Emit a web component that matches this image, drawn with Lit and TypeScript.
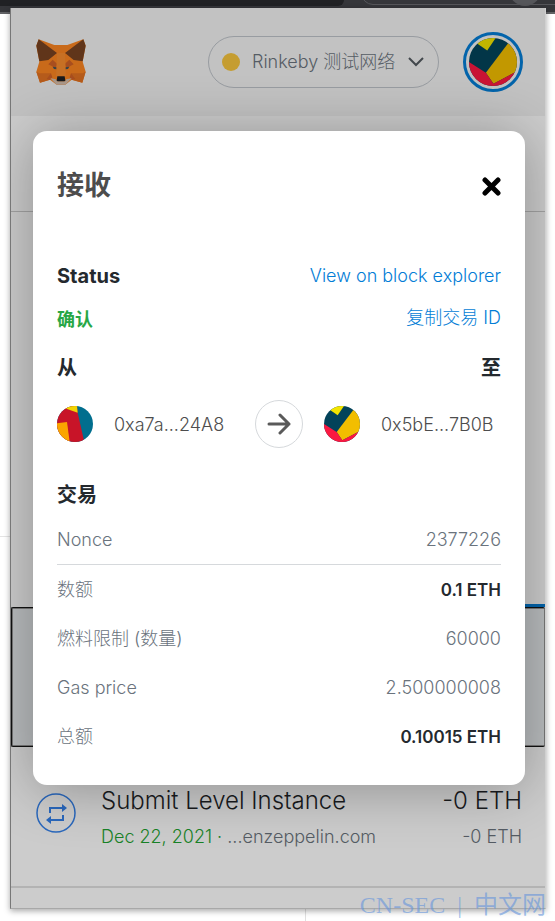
import { LitElement, html, svg, css } from "lit";
import { customElement, property } from "lit/decorators.js";
import { classMap } from "lit/directives/class-map.js";

type Row = { label: string; value: string; strong?: boolean; ruled?: boolean };

const ROWS: Row[] = [
  { label: "Nonce", value: "2377226", ruled: true },
  { label: "数额", value: "0.1 ETH", strong: true },
  { label: "燃料限制 (数量)", value: "60000" },
  { label: "Gas price", value: "2.500000008" },
  { label: "总额", value: "0.10015 ETH", strong: true },
];

@customElement("jazz-avatar")
export class JazzAvatar extends LitElement {
  @property() kind: "to" | "from" = "to";

  static styles = css`
    :host { display: block; border-radius: 50%; overflow: hidden; flex: none; }
    .art { display: block; width: 100%; height: 100%; }
  `;

  render() {
    const to = svg`
      <rect width="108" height="108" fill="#03435a"/>
      <path d="M15 10 41 28 60 0H15z" fill="#f3e400"/>
      <path d="M88 12 38 78 55 103 108 75V0z" fill="#f2be00"/>
      <path d="M0 54 38 78 55 103 108 75V108H0z" fill="#fb1841"/>`;
    const from = svg`
      <rect width="108" height="108" fill="#016e8e"/>
      <path d="M0 0H60L62 20 82 108H0z" fill="#c81428"/>
      <path d="M28 8 62 20 60 0H28z" fill="#f2d402"/>
      <path d="M0 52 30 48 38 108H0z" fill="#fba500"/>`;
    return html`<svg class="art" viewBox="0 0 108 108" aria-hidden="true">${this.kind === "to" ? to : from}</svg>`;
  }
}

@customElement("transaction-dialog")
export class TransactionDialog extends LitElement {
  static styles = css`
    :host { display: block; }
    * { box-sizing: border-box; }
    .dialog {
      padding: 35px 24px 24px;
      border-radius: 14px;
      background: #fff;
      box-shadow: 0 4px 56px rgba(0, 0, 0, 0.3);
      color: #24292e;
    }
    .row { display: flex; align-items: center; justify-content: space-between; }
    .head { height: 40px; margin-bottom: 49px; }
    .title { margin: 0; font-size: 27px; line-height: 40px; font-weight: 700; color: #4d4d4d; }
    .close { width: 20px; height: 20px; padding: 0; border: 0; background: none; cursor: pointer; }
    .close svg { display: block; }
    .line { height: 42px; }
    .ends { height: 58px; }
    .sub { margin: 0; font-size: 20px; line-height: 28px; font-weight: 700; }
    .confirmed { font-size: 18px; font-weight: 700; color: #28a745; }
    .link { padding: 0; border: 0; background: none; font: inherit; font-size: 18px; line-height: 24px; color: #037dd6; text-decoration: none; cursor: pointer; }
    .parties { display: grid; grid-template-columns: 1fr 48px 1fr; align-items: center; margin: 3px 0 33px; }
    .party { display: flex; align-items: center; gap: 21px; font-size: 18px; color: #4d4d4d; }
    .right { padding-left: 21px; }
    .avatar { width: 36px; height: 36px; }
    .arrow { display: grid; place-items: center; height: 48px; border: 1px solid #d6d9dc; border-radius: 50%; }
    .data { width: 100%; margin-top: 6px; border-collapse: separate; border-spacing: 0; font-size: 18px; line-height: 24px; color: #6a737d; }
    .data th, .data td { height: 49px; padding: 0; font-weight: inherit; }
    .data th { text-align: left; }
    .data td { text-align: right; }
    .data .ruled th, .data .ruled td { height: 50px; border-bottom: 1px solid #d6d9dc; }
    .data .strong td { font-size: 17px; font-weight: 600; color: #24292e; }
  `;

  render() {
    return html`
      <section class="dialog" role="dialog" aria-labelledby="title">
        <header class="row head">
          <h1 class="title" id="title">接收</h1>
          <button class="close" aria-label="关闭">
            <svg width="20" height="20" viewBox="0 0 20 20"><path d="M4 4 17 17M17 4 4 17" stroke="#000" stroke-width="5" stroke-linecap="round"/></svg>
          </button>
        </header>
        <div class="row line">
          <h2 class="sub">Status</h2>
          <a class="link" href="#explorer">View on block explorer</a>
        </div>
        <div class="row line">
          <span class="confirmed">确认</span>
          <button class="link">复制交易 ID</button>
        </div>
        <div class="row ends"><h2 class="sub">从</h2><h2 class="sub">至</h2></div>
        <div class="parties">
          <div class="party"><jazz-avatar class="avatar" kind="from"></jazz-avatar><span>0xa7a...24A8</span></div>
          <div class="arrow">
            <svg width="24" height="24" viewBox="0 0 24 24" fill="none" stroke="#5a5a5a" stroke-width="3" stroke-linecap="round" stroke-linejoin="round"><path d="M2 12H22M13 3 22 12 13 21"/></svg>
          </div>
          <div class="party right"><jazz-avatar class="avatar" kind="to"></jazz-avatar><span>0x5bE...7B0B</span></div>
        </div>
        <h2 class="sub">交易</h2>
        <table class="data">
          <tbody>
            ${ROWS.map(
              (r) => html`<tr class=${classMap({ strong: !!r.strong, ruled: !!r.ruled })}>
                <th scope="row">${r.label}</th><td>${r.value}</td>
              </tr>`
            )}
          </tbody>
        </table>
      </section>
    `;
  }
}

@customElement("app-root")
export class AppRoot extends LitElement {
  static styles = css`
    :host {
      display: block;
      position: relative;
      min-height: 100vh;
      overflow: hidden;
      background: #fff;
      font-family: Inter, "Noto Sans CJK SC", sans-serif;
      font-weight: 300;
    }
    * { box-sizing: border-box; }
    .chrome { position: absolute; inset: 0 0 auto; height: 14px; background: #35363a; border-bottom: 2px solid #616265; overflow: hidden; }
    .tabs { width: 62%; height: 6px; border-radius: 0 0 14px 0; background: #202124; }
    .omnibox { position: absolute; left: 65%; right: -20px; bottom: 7px; height: 24px; border: 1px solid #55565a; border-radius: 12px; }
    .bubble { position: absolute; right: 14px; bottom: 6px; width: 32px; height: 32px; border-radius: 50%; background: #55565a; }
    .rule { position: absolute; left: 0; top: 536px; width: 10px; height: 1px; background: #e4e4e4; }
    .tick { position: absolute; left: 55%; bottom: 0; width: 1px; height: 13px; background: #e0e0e0; }
    .popup {
      position: relative;
      display: grid;
      margin: 0 9px 0 10px;
      border: 1px solid #a8a8a8;
      border-left-color: #777;
      border-right-color: #d0d0d0;
      border-top: 0;
      background: #ccc;
      box-shadow: 0 2px 6px rgba(0, 0, 0, 0.35);
    }
    .stage { padding: 8px 0 12px; }
    .wallet, .modal { grid-area: 1 / 1; min-width: 0; }
    .clip { display: grid; overflow: hidden; }
    .modal { margin: 123px 20px auto 22px; }
    .top { display: flex; align-items: center; height: 108px; padding: 0 22px 0 25px; background: #c2c2c2; }
    .fox { display: block; width: 50px; height: 46px; }
    .network { display: flex; align-items: center; height: 52px; margin: 0 24px 0 auto; padding: 0 14px 0 13px; gap: 12px; border: 1px solid #989ca1; border-radius: 26px; }
    .dot { width: 18px; height: 18px; border-radius: 50%; background: #c59d31; }
    .select { appearance: none; padding: 0; border: 0; background: none; font: inherit; font-size: 18px; line-height: 24px; color: #555c64; }
    .me { display: grid; place-items: center; width: 60px; height: 60px; padding: 0; border: 3px solid #0364ab; border-radius: 50%; background: none; }
    .ring { width: 48px; height: 48px; filter: brightness(0.8); }
    .account { height: 96px; border-bottom: 1px solid #a3a3a3; }
    .balance { height: 392px; }
    .indicator { width: 50%; height: 3px; margin-left: auto; background: #0364ab; }
    .focused { height: 140px; border: 1px solid #111; border-right: 0; border-radius: 2px; background: #b9bcbe; box-shadow: inset 0 0 0 1px #777; }
    .activity { display: grid; grid-template-columns: 41px 1fr auto; column-gap: 24px; height: 141px; padding: 38px 23px 0 25px; border-bottom: 2px solid #b3b3b3; }
    .swap { margin-top: 8px; }
    .name { margin: 0; font-size: 24px; line-height: 32px; font-weight: inherit; color: #191b1e; }
    .meta { margin: 0; padding-top: 4px; font-size: 18px; line-height: 32px; color: #555c64; }
    .date { color: #188227; }
    .end { text-align: right; }
    .foot { height: 20px; }
    .mark { position: absolute; right: 9px; bottom: 0; display: flex; gap: 12px; margin: 0; font: 400 24px/32px "Liberation Serif", "Noto Sans CJK SC", serif; color: rgba(100, 148, 220, 0.6); }
  `;

  private fox() {
    return html`<svg class="fox" viewBox="108 117 150 138" role="img" aria-label="MetaMask">
      <path fill="#c96a1a" d="M116 118 163 135H202L250 118 257 137 248 185 257 215 247 248 215 239 196 254H170L150 239 120 248 109 215 118 185 109 137z"/>
      <path fill="#b55b1b" d="M109 215 118 220H153L150 239 120 248zM257 215 248 220H213L215 239 247 248z"/>
      <path fill="#60351a" d="M116 118 171 159 145 180 118 184 109 137zM250 118 195 159 221 180 248 184 257 137z"/>
      <path fill="#a84e1e" d="M158 179 145 193 168 205 172 192zM208 179 221 193 198 205 194 192zM153 220 140 237 150 239 157 232zM213 220 226 237 215 239 209 232z"/>
      <path fill="#c77024" d="M171 159H195L198 230H168z"/>
      <path fill="#a99789" d="M151 235 168 238 172 244H195L198 238 215 235 196 254H170z"/>
      <path fill="#171a1d" d="M172 229H194L196 242 193 244H173L170 242z"/>
      <path fill="#37434a" d="M158 200 169 202V208L162 207zM208 200 197 202V208L204 207z"/>
    </svg>`;
  }

  render() {
    return html`
      <div class="chrome"><div class="tabs"></div><div class="omnibox"></div><div class="bubble"></div></div>
      <div class="rule"></div>
      <div class="tick"></div>
      <div class="stage">
        <main class="popup">
          <div class="clip">
            <div class="wallet">
              <header class="top">
                ${this.fox()}
                <label class="network">
                  <span class="dot"></span>
                  <select class="select" aria-label="网络"><option>Rinkeby 测试网络</option></select>
                  <svg width="16" height="10" viewBox="0 0 16 10" fill="none" stroke="#43484d" stroke-width="2"><path d="M1 1 8 8 15 1"/></svg>
                </label>
                <button class="me" aria-label="我的账户"><jazz-avatar class="ring" kind="to"></jazz-avatar></button>
              </header>
              <div class="account"></div>
              <div class="balance"></div>
              <div class="indicator"></div>
              <div class="focused"></div>
              <article class="activity">
                <svg class="swap" width="41" height="41" viewBox="0 0 41 41" fill="none" stroke="#2a68bd">
                  <circle cx="20" cy="20" r="19" stroke-width="1.5"/>
                  <path stroke-width="2" d="M14 20V15H27M27 22V27H14"/>
                  <path fill="#2a68bd" stroke="none" d="M26 11 31 15 26 19zM15 23 10 27 15 31z"/>
                </svg>
                <div>
                  <h2 class="name">Submit Level Instance</h2>
                  <p class="meta"><span class="date">Dec 22, 2021 · </span>...enzeppelin.com</p>
                </div>
                <div class="end">
                  <p class="name">-0 ETH</p>
                  <p class="meta">-0 ETH</p>
                </div>
              </article>
              <div class="foot"></div>
            </div>
            <transaction-dialog class="modal"></transaction-dialog>
          </div>
        </main>
      </div>
      <p class="mark"><span>CN-SEC</span><span>|</span><span>中文网</span></p>
    `;
  }
}
